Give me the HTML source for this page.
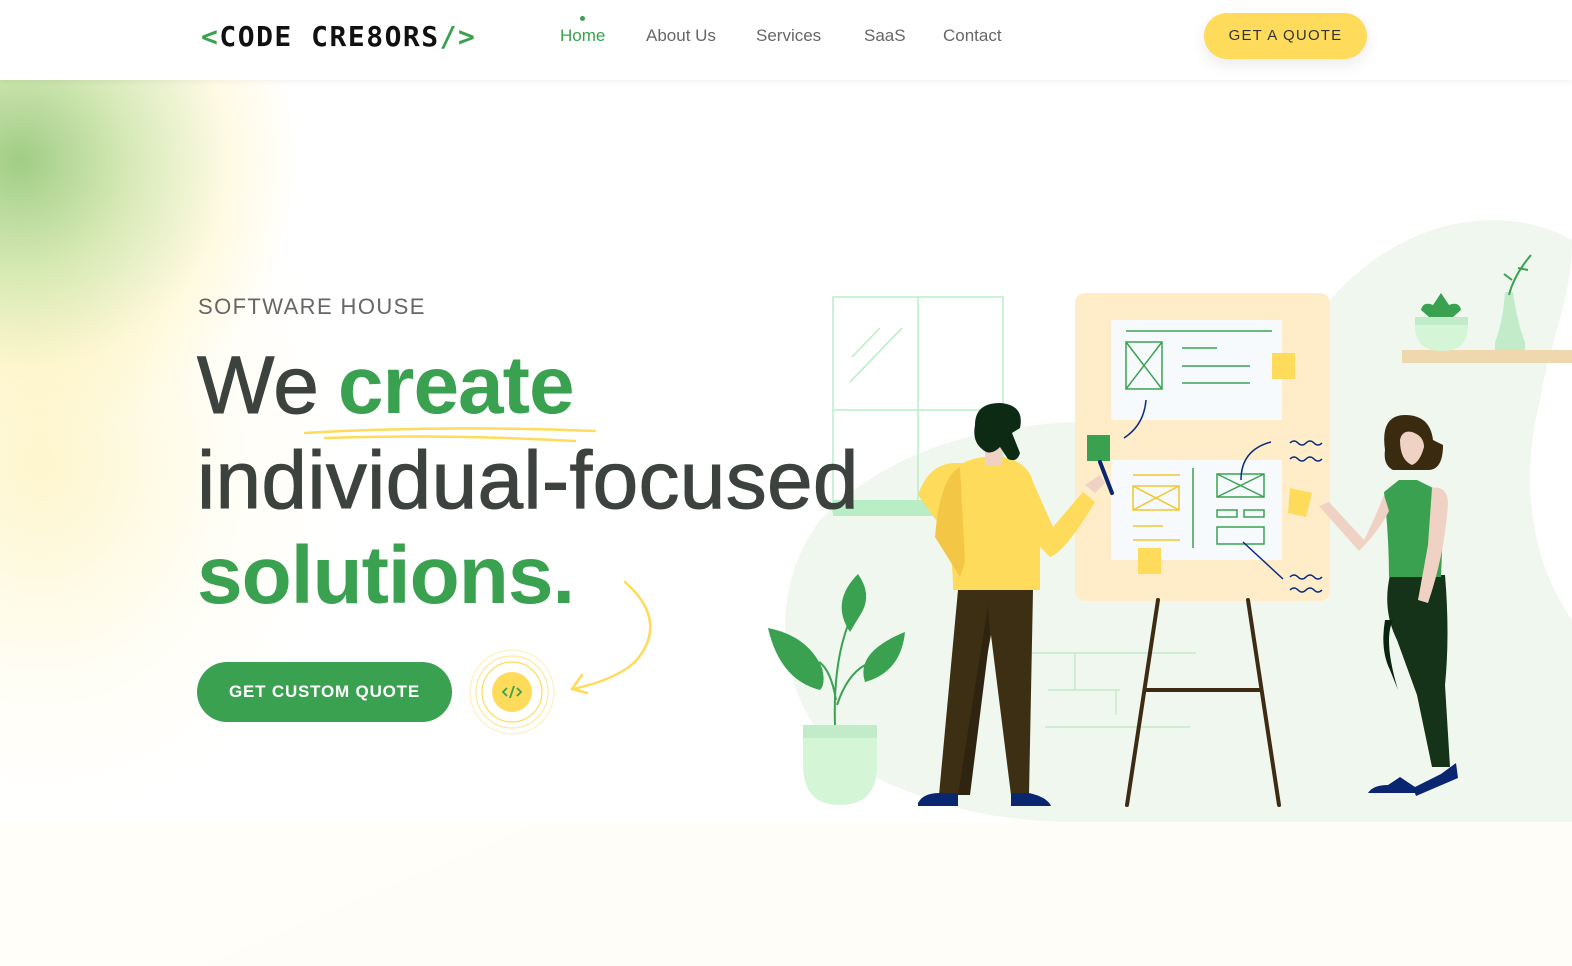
<!DOCTYPE html>
<html><head><meta charset="utf-8">
<style>
*{margin:0;padding:0;box-sizing:border-box}
body{width:1572px;height:966px;overflow:hidden;background:#fff;font-family:"Liberation Sans",sans-serif;position:relative}
.bg{position:absolute;left:0;top:80px;width:1572px;height:886px;overflow:hidden}
.blob1{position:absolute;left:-260px;top:-200px;width:560px;height:560px;background:radial-gradient(closest-side,rgba(150,200,120,.9),rgba(190,220,140,.6) 40%,rgba(255,240,170,.3) 75%,rgba(255,255,255,0) 100%)}
.blob2{position:absolute;left:-260px;top:20px;width:600px;height:720px;background:radial-gradient(closest-side,rgba(253,240,170,.6),rgba(255,250,220,.3) 60%,rgba(255,255,255,0) 100%)}
.bottom{position:absolute;left:0;top:822px;width:1572px;height:144px;background:#fffdf7}
header{position:absolute;left:0;top:0;width:1572px;height:80px;background:#fff;box-shadow:0 2px 6px rgba(0,0,0,.05);z-index:5}
.logo{position:absolute;left:201px;top:20px;font-family:"DejaVu Sans Mono","Liberation Mono",monospace;font-weight:bold;font-size:28px;color:#111;letter-spacing:1.5px}
.logo b{color:#3aa151}
nav{position:absolute;top:26px;left:560px;font-size:17px;color:#666}
nav span{position:absolute;white-space:nowrap}
.dot{position:absolute;left:580px;top:16px;width:5px;height:5px;border-radius:50%;background:#3aa151}
.quote{position:absolute;left:1204px;top:13px;width:163px;height:46px;border-radius:23px;background:#fedb5b;color:#333;font-size:15px;letter-spacing:1.2px;text-align:center;line-height:46px;box-shadow:0 6px 16px rgba(0,0,0,.08)}
.sub{position:absolute;left:198px;top:294px;font-size:22px;letter-spacing:1.4px;color:#666}
.h{position:absolute;left:197px;font-size:82px;line-height:80px;letter-spacing:.3px;color:#3c423e;white-space:nowrap;-webkit-text-stroke:1px #3c423e}
.g{color:#3aa151;font-weight:bold;-webkit-text-stroke:0;letter-spacing:-1px}
.btn{position:absolute;left:197px;top:662px;width:255px;height:60px;border-radius:30px;background:#3aa151;color:#fff;font-size:17px;letter-spacing:.8px;font-weight:bold;text-align:center;line-height:60px}
</style></head><body>
<div class="bg"><div class="blob2"></div><div class="blob1"></div></div>
<div class="bottom"></div>
<svg style="position:absolute;left:0;top:822px" width="1572" height="144"><path d="M0 0 H540 L200 144 H0Z" fill="#fffef9"/></svg>
<header>
<div class="logo"><b>&lt;</b>CODE CRE8ORS<b>/&gt;</b></div>
<div class="dot"></div>
<nav><span style="left:0;color:#3aa151">Home</span><span style="left:86px">About Us</span><span style="left:196px">Services</span><span style="left:304px">SaaS</span><span style="left:383px">Contact</span></nav>
<div class="quote">GET A QUOTE</div>
</header>

<svg style="position:absolute;left:0;top:0" width="1572" height="966">
<path d="M1572 240 C1500 200 1400 220 1330 300 L1300 330 L1140 420 C1000 420 900 440 820 520 C760 600 780 720 860 770 C940 810 1000 820 1060 822 L1572 822 L1572 620 C1530 560 1520 480 1540 400 C1550 340 1572 300 1572 240Z" fill="#f0f7ef"/>
<g stroke="#b9edc6" stroke-width="1.5" fill="none"><rect x="833" y="297" width="170" height="215"/><line x1="918" y1="297" x2="918" y2="505"/><line x1="833" y1="410" x2="1003" y2="410"/><line x1="852" y1="357" x2="880" y2="328"/><line x1="850" y1="382" x2="902" y2="328"/></g>
<rect x="833" y="500" width="115" height="16" fill="#b9edc6"/>
<g stroke="#c2ecc9" stroke-width="1.5"><line x1="1030" y1="653" x2="1196" y2="653"/><line x1="1075" y1="653" x2="1075" y2="690"/><line x1="1048" y1="690" x2="1120" y2="690"/><line x1="1116" y1="690" x2="1116" y2="715"/><line x1="1045" y1="727" x2="1190" y2="727"/></g>
<rect x="1402" y="350" width="170" height="13" fill="#efd8ad"/>
<path d="M1415 318 h53 v8 q0 25 -26 25 q-27 0 -27 -25z" fill="#d4f5d6"/><rect x="1415" y="317" width="53" height="8" fill="#c2ecc9"/>
<path d="M1441 293 l8 12 q10 -4 12 5 l-8 7 h-24 l-8 -7 q2 -9 12 -5z" fill="#3aa151"/>
<path d="M1505 292 h8 q4 30 12 50 l0 8 h-30 l0 -8 q8 -20 10 -50z" fill="#c2ecc9"/>
<path d="M1509 295 q5 -20 22 -40 M1512 280 l-8 -6 M1518 268 l10 2" stroke="#3aa151" stroke-width="2" fill="none"/>
<path d="M803 725 h74 v40 q0 40 -37 40 q-37 0 -37 -40z" fill="#d4f5d6"/><rect x="803" y="725" width="74" height="13" fill="#c2ecc9"/>
<g fill="#3aa151"><path d="M858 574 q14 20 4 38 l-12 20 q-20 -30 8 -58z"/><path d="M768 628 q40 8 54 40 q4 16 -2 22 q-40 -10 -52 -62z"/><path d="M905 632 q-4 40 -40 50 q-10 -30 40 -50z"/></g>
<path d="M835 725 q-2 -60 13 -100 M836 700 q-5 -30 -17 -38 M837 705 q10 -30 28 -40" stroke="#3aa151" stroke-width="2" fill="none"/>
<rect x="1075" y="293" width="255" height="308" rx="10" fill="#feedc8"/>
<g stroke="#3d2c13" stroke-width="4" stroke-linecap="round"><line x1="1158" y1="600" x2="1127" y2="805"/><line x1="1248" y1="600" x2="1279" y2="805"/><line x1="1147" y1="690" x2="1260" y2="690"/></g>
<rect x="1111" y="320" width="171" height="100" fill="#f6fafd"/>
<rect x="1111" y="460" width="171" height="100" fill="#f6fafd"/>
<g stroke="#3aa151" stroke-width="1.5" fill="none"><line x1="1126" y1="331" x2="1272" y2="331"/><rect x="1126" y="342" width="36" height="47"/><line x1="1126" y1="342" x2="1162" y2="389"/><line x1="1162" y1="342" x2="1126" y2="389"/><line x1="1182" y1="348" x2="1217" y2="348"/><line x1="1182" y1="366" x2="1250" y2="366"/><line x1="1182" y1="383" x2="1250" y2="383"/>
<line x1="1193" y1="468" x2="1193" y2="548"/><rect x="1217" y="474" width="47" height="23"/><line x1="1217" y1="474" x2="1264" y2="497"/><line x1="1264" y1="474" x2="1217" y2="497"/><rect x="1217" y="510" width="20" height="7"/><rect x="1244" y="510" width="20" height="7"/><rect x="1217" y="527" width="47" height="17"/></g>
<g stroke="#f2c630" stroke-width="1.5" fill="none"><line x1="1133" y1="475" x2="1180" y2="475"/><rect x="1133" y="486" width="46" height="24"/><line x1="1133" y1="486" x2="1179" y2="510"/><line x1="1179" y1="486" x2="1133" y2="510"/><line x1="1133" y1="526" x2="1163" y2="526"/><line x1="1133" y1="540" x2="1180" y2="540"/></g>
<rect x="1272" y="353" width="23" height="26" fill="#fedb5b"/><rect x="1138" y="548" width="23" height="26" fill="#fedb5b"/><rect x="1087" y="435" width="23" height="26" fill="#3aa151"/>
<path d="M1290 488 l22 5 -6 24 -18 -4z" fill="#fedb5b"/>
<g stroke="#0a2a80" stroke-width="1.5" fill="none"><path d="M1146 400 q-2 25 -22 38"/><path d="M1241 480 q0 -30 30 -38"/><path d="M1243 542 l40 37"/><path d="M1290 443 q4 -4 8 0 q4 4 8 0 q4 -4 8 0 q4 4 8 0 M1290 459 q4 -4 8 0 q4 4 8 0 q4 -4 8 0 q4 4 8 0 M1290 577 q4 -4 8 0 q4 4 8 0 q4 -4 8 0 q4 4 8 0 M1290 590 q4 -4 8 0 q4 4 8 0 q4 -4 8 0 q4 4 8 0"/></g>
<path d="M958 590 h75 l-4 205 h-18 l-20 -160 -30 160 h-22z" fill="#3d2f13"/>
<path d="M990 635 l-20 160 h-12 l30 -190z" fill="#2f2410"/>
<path d="M918 803 q5 -10 22 -10 h18 v13 h-40z M1011 793 h18 q18 4 22 13 h-40z" fill="#0a2670"/>
<path d="M963 463 q15 -8 40 -6 q25 5 30 25 l20 45 l30 -35 l12 10 q-30 50 -45 55 l-10 -10 v43 h-87 q0 -40 -10 -60 l-25 -35 q10 -30 35 -32z" fill="#fedb5b"/>
<path d="M960 467 q-20 10 -25 70 l25 40 l5 -15 z" fill="#f4c646"/>
<rect x="985" y="430" width="17" height="35" fill="#f0d2c4"/>
<path d="M975 425 q0 -22 25 -22 q25 2 20 25 l-8 5 l8 20 q-3 10 -12 6 l-8 -12 q-10 10 -18 2 q-10 -8 -7 -24z" fill="#0c2a14"/>
<path d="M1085 485 l15 -10 l5 8 -10 10z" fill="#f0d2c4"/>
<line x1="1100" y1="462" x2="1112" y2="493" stroke="#0a2670" stroke-width="4" stroke-linecap="round"/>
<path d="M1390 575 h55 q5 60 0 110 l5 82 h-18 l-15 -72 l-20 -55 q-15 -30 -7 -65z" fill="#143318"/>
<path d="M1385 620 q-5 30 5 50 l8 20 q-15 -50 -5 -70z" fill="#0b2410"/>
<path d="M1368 793 q5 -8 20 -8 l12 -8 l15 10 v6z M1413 788 l28 -14 l15 -11 l2 15 -42 18z" fill="#0a2670"/>
<path d="M1384 492 l15 -12 h18 l20 10 l7 10 l-3 77 h-52 q0 -40 -5 -85z" fill="#3aa151"/>
<path d="M1432 488 q15 -3 16 15 q-3 50 -20 100 l-10 -3 l10 -55z M1384 495 q-12 30 -20 45 l-35 -38 l-10 4 l40 45 q20 -20 30 -40z" fill="#f0d2c4"/>
<path d="M1385 450 q-5 -35 20 -35 q25 0 28 25 l10 5 q0 25 -15 25 h-35 q-10 -5 -8 -20z" fill="#3a2a10"/>
<path d="M1400 440 q2 -10 12 -8 q12 4 12 15 q-4 15 -12 18 q-12 -5 -12 -25z" fill="#f0d2c4"/>
<path d="M305 433 q140 -8 290 -2 M325 438 q120 -4 250 3" stroke="#fedb5b" stroke-width="2.5" fill="none" stroke-linecap="round"/>
<path d="M625 582 q45 40 10 80 q-20 18 -62 27 M582 675 l-10 14 15 4" stroke="#fedb5b" stroke-width="2.5" fill="none" stroke-linecap="round"/>
<circle cx="512" cy="692" r="42" fill="none" stroke="#fff0c0" stroke-width="1.2"/>
<circle cx="512" cy="692" r="36" fill="none" stroke="#fee8a0" stroke-width="1.2"/>
<circle cx="512" cy="692" r="30" fill="none" stroke="#fedb5b" stroke-width="1.2"/>
<circle cx="512" cy="692" r="20" fill="#fedb5b"/>
<path d="M507 688 l-4 4 4 4 M517 688 l4 4 -4 4 M514 686 l-4 12" stroke="#3aa151" stroke-width="1.8" fill="none"/>
</svg>

<div class="sub">SOFTWARE HOUSE</div>
<div class="h" style="top:346px">We<span style="letter-spacing:-4px"> </span><span class="g">create</span></div>
<div class="h" style="top:441px">individual-focused</div>
<div class="h" style="top:536px"><span class="g">solutions.</span></div>
<div class="btn">GET CUSTOM QUOTE</div>
</body></html>
